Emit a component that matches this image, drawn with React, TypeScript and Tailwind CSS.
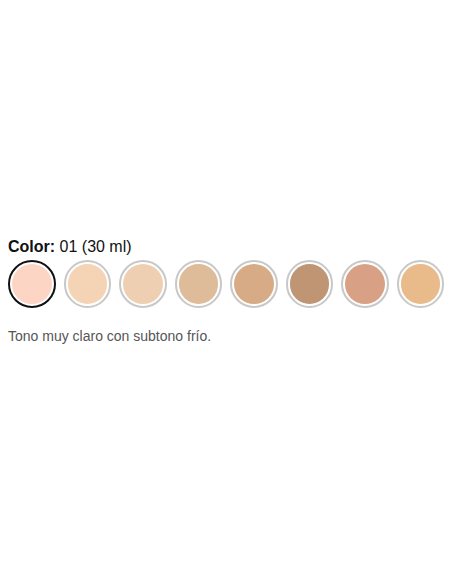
import React from "react";

const shades = [
  "#fcd5c4",
  "#f5d4b5",
  "#efcfb1",
  "#dfbc99",
  "#d6ab85",
  "#c09574",
  "#d8a185",
  "#e9ba8a",
];

export default function App() {
  return (
    <div
      className="w-[452px] h-[584px] bg-white px-2 pt-[237px]"
      style={{ fontFamily: '"Liberation Sans", Arial, sans-serif' }}
    >
      <div className="text-[16px] leading-[20px] text-[#111]">
        <span className="font-bold">Color:</span> 01 (30 ml)
      </div>
      <div className="mt-[3px] flex gap-2">
        {shades.map((c, i) => (
          <button
            key={c}
            className={
              i === 0
                ? "w-12 h-12 rounded-full border-2 border-[#111] bg-white p-[2px]"
                : "w-12 h-12 rounded-full border-2 border-[#c8c8c8] bg-white p-[2px]"
            }
          >
            <span
              className="block w-full h-full rounded-full"
              style={{ backgroundColor: c }}
            />
          </button>
        ))}
      </div>
      <p className="mt-[18px] text-[14px] leading-[20px] text-[#555]">
        Tono muy claro con subtono frío.
      </p>
    </div>
  );
}
